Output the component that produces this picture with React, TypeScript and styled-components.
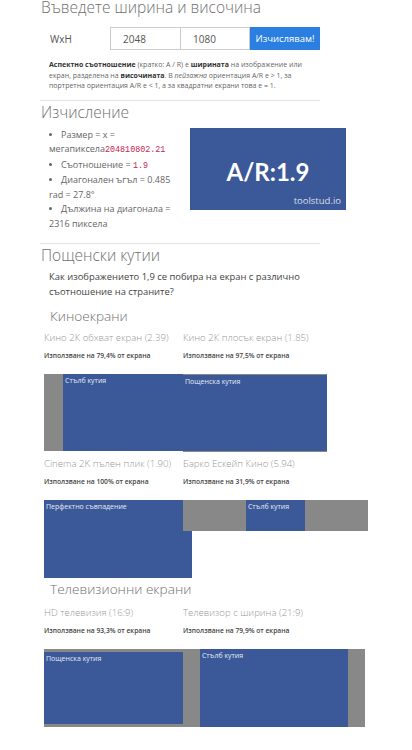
import React from 'react';
import styled, { createGlobalStyle } from 'styled-components';

const GlobalStyle = createGlobalStyle`
  body {
    margin: 0;
    background: #fff;
    font-family: "Open Sans", "Noto Sans", sans-serif;
    color: #555;
  }
`;

const IMAGE_RATIO = 1.9;
const MAX_W = 185;
const MAX_H = 78;

const Page = styled.div`
  width: 280px;
  padding-left: 40px;
`;

const Heading = styled.h2<{ $top?: number }>`
  margin: ${p => p.$top ?? 0}px 0 0 1px;
  font-weight: 300;
  font-size: 15.5px;
  line-height: 22px;
  color: #707070;
`;

const SubHeading = styled.h3<{ $top?: number }>`
  margin: ${p => p.$top ?? 0}px 0 0 10px;
  font-weight: 300;
  font-size: 13.6px;
  line-height: 20px;
  color: #707070;
`;

const Rule = styled.hr<{ $top?: number }>`
  margin: ${p => p.$top ?? 0}px 0 0;
  border: 0;
  border-top: 1px solid #e2e2e2;
`;

const InputRow = styled.form`
  display: flex;
  align-items: center;
  margin: 9px 0 0 10px;
  height: 23px;
`;

const FieldLabel = styled.label`
  width: 60px;
  font-size: 10px;
  color: #555;
`;

const NumberInput = styled.input`
  box-sizing: border-box;
  width: 70px;
  height: 23px;
  margin: 0;
  padding: 0 12px;
  border: 1px solid #ccc;
  border-right-width: 0;
  font-family: inherit;
  font-size: 10px;
  color: #555;
  background: #fff;
  &:last-of-type {
    border-right-width: 1px;
  }
`;

const Submit = styled.button`
  box-sizing: border-box;
  width: 70px;
  height: 23px;
  border: 0;
  background: #2a7fe0;
  color: #fff;
  font-family: inherit;
  font-size: 9.5px;
  padding: 0;
`;

const Intro = styled.p`
  margin: 10px 0 0 9px;
  width: 264px;
  font-size: 7px;
  line-height: 10.5px;
  color: #666;
  b { color: #333; }
`;

const CalcRow = styled.div`
  display: flex;
  align-items: flex-start;
  margin-top: 5px;
`;

const Results = styled.ul`
  box-sizing: border-box;
  flex: none;
  width: 150px;
  margin: 0;
  padding: 0 16px 0 9px;
  list-style: inside disc;
  font-size: 9px;
  line-height: 14.5px;
  color: #666;
  li::marker { font-size: 8px; }
`;

const Code = styled.code`
  font-family: "Liberation Mono", monospace;
  font-size: 8.4px;
  color: #c7254e;
`;

const ArBadge = styled.div`
  position: relative;
  flex: none;
  width: 156px;
  height: 82px;
  background: #3b5998;
  display: flex;
  align-items: center;
  justify-content: center;
`;

const ArText = styled.span`
  margin-top: 5px;
  font-family: Lato, "Open Sans", sans-serif;
  font-weight: 700;
  font-size: 24px;
  color: #fff;
`;

const Watermark = styled.span`
  position: absolute;
  right: 5px;
  bottom: 3px;
  font-size: 9.5px;
  color: #d8deec;
`;

const Question = styled.p`
  margin: 3px 0 0 9px;
  width: 262px;
  font-size: 9.4px;
  line-height: 15px;
  color: #444;
`;

const ScreenGrid = styled.div<{ $top?: number }>`
  display: grid;
  grid-template-columns: 139px 139px;
  row-gap: 5px;
  margin: ${p => p.$top ?? 0}px 0 0 4px;
`;

const Cell = styled.div`
  min-width: 0;
`;

const ScreenName = styled.div`
  font-size: 9.6px;
  line-height: 14px;
  font-weight: 300;
  color: #999;
  white-space: nowrap;
`;

const Usage = styled.div`
  margin-top: 6px;
  font-size: 6.7px;
  line-height: 10px;
  font-weight: 600;
  color: #444;
  white-space: nowrap;
`;

const Frame = styled.div`
  margin-top: 13px;
  background: #888;
  display: flex;
  align-items: center;
  justify-content: center;
`;

const Picture = styled.div`
  flex: none;
  box-sizing: border-box;
  background: #3b5998;
  padding: 2px 2px 0;
  font-size: 7px;
  line-height: 9px;
  color: #e6e9f4;
  white-space: nowrap;
  overflow: hidden;
`;

type Screen = { name: string; ratio: number; usage: string };

const cinema: Screen[] = [
  { name: 'Кино 2К обхват екран (2.39)', ratio: 2.39, usage: '79,4%' },
  { name: 'Кино 2К плосък екран (1.85)', ratio: 1.85, usage: '97,5%' },
  { name: 'Cinema 2K пълен плик (1.90)', ratio: 1.9, usage: '100%' },
  { name: 'Барко Ескейп Кино (5.94)', ratio: 5.94, usage: '31,9%' },
];

const tv: Screen[] = [
  { name: 'HD телевизия (16:9)', ratio: 16 / 9, usage: '93,3%' },
  { name: 'Телевизор с ширина (21:9)', ratio: 21 / 9, usage: '79,9%' },
];

function ScreenBox({ screen }: { screen: Screen }) {
  const w = Math.min(MAX_W, MAX_H * screen.ratio);
  const h = w / screen.ratio;
  let pw = w;
  let ph = h;
  let label = 'Перфектно съвпадение';
  if (Math.abs(screen.ratio - IMAGE_RATIO) > 0.005) {
    if (IMAGE_RATIO > screen.ratio) {
      ph = w / IMAGE_RATIO;
      label = 'Пощенска кутия';
    } else {
      pw = h * IMAGE_RATIO;
      label = 'Стълб кутия';
    }
  }
  return (
    <Cell>
      <ScreenName>{screen.name}</ScreenName>
      <Usage>Използване на {screen.usage} от екрана</Usage>
      <Frame style={{ width: w, height: h }}>
        <Picture style={{ width: pw, height: ph }}>{label}</Picture>
      </Frame>
    </Cell>
  );
}

export default function App(): JSX.Element {
  return (
    <Page>
      <GlobalStyle />
      <Heading $top={-4}>Въведете ширина и височина</Heading>

      <InputRow onSubmit={e => e.preventDefault()}>
        <FieldLabel>WxH</FieldLabel>
        <NumberInput defaultValue="2048" />
        <NumberInput defaultValue="1080" />
        <Submit type="submit">Изчислявам!</Submit>
      </InputRow>

      <Intro>
        <b>Аспектно съотношение</b> (кратко: A / R) е <b>ширината</b> на изображение или екран,
        разделена на <b>височината</b>. В <i>пейзажна</i> ориентация A/R е &gt; 1, за портретна
        ориентация A/R е &lt; 1, а за квадратни екрани това е = 1.
      </Intro>

      <Rule $top={8} />
      <Heading>Изчисление</Heading>

      <CalcRow>
        <Results>
          <li>Размер = x = мегапиксела<Code>204810802.21</Code></li>
          <li>Съотношение = <Code>1.9</Code></li>
          <li>Диагонален ъгъл = 0.485 rad = 27.8°</li>
          <li>Дължина на диагонала = 2316 пиксела</li>
        </Results>
        <ArBadge>
          <ArText>A/R:1.9</ArText>
          <Watermark>toolstud.io</Watermark>
        </ArBadge>
      </CalcRow>

      <Rule $top={12} />
      <Heading>Пощенски кутии</Heading>
      <Question>Как изображението 1,9 се побира на екран с различно съотношение на страните?</Question>

      <SubHeading $top={7}>Киноекрани</SubHeading>
      <ScreenGrid $top={5}>
        {cinema.map(s => <ScreenBox key={s.name} screen={s} />)}
      </ScreenGrid>

      <SubHeading $top={1}>Телевизионни екрани</SubHeading>
      <ScreenGrid $top={7}>
        {tv.map(s => <ScreenBox key={s.name} screen={s} />)}
      </ScreenGrid>
    </Page>
  );
}
